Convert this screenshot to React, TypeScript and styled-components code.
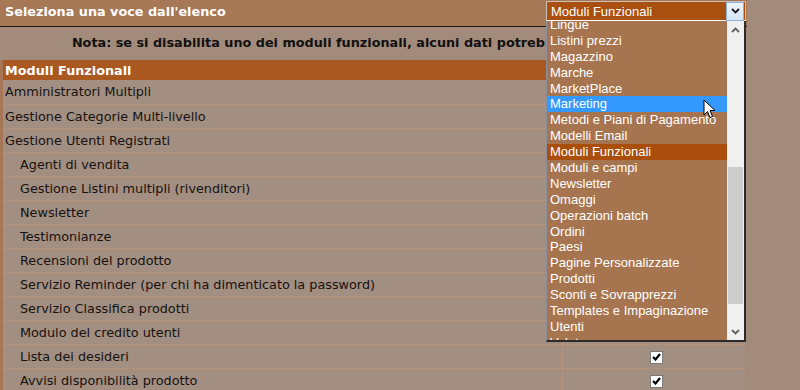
import styled, { createGlobalStyle } from 'styled-components';

const GlobalStyle = createGlobalStyle`
  body {
    margin: 0;
    background-color: #a38b7b;
    font-family: "DejaVu Sans", Verdana, sans-serif;
  }
`;

const Page = styled.div`
  position: relative;
  width: 747px;
  height: 390px;
  overflow: hidden;
`;

const TopBar = styled.div`
  height: 26px;
  background-color: #a67856;
  border-bottom: 1px solid #1e1712;
  display: flex;
  justify-content: space-between;
  align-items: flex-start;
`;

const Title = styled.div`
  color: #fff;
  font-weight: bold;
  font-size: 12.8px;
  padding: 4px 0 0 5px;
`;

const SelectWrap = styled.div`
  position: relative;
  width: 200px;
  margin-right: 1px;
`;

const SelectBox = styled.div`
  height: 18px;
  margin-top: 1px;
  background-color: #a94f10;
  border: 1px solid #c9c0b8;
  border-bottom: 2px solid #fff;
  display: flex;
  align-items: center;
  justify-content: space-between;
`;

const SelectText = styled.span`
  color: #fff;
  font-family: "Liberation Sans", Arial, sans-serif;
  font-size: 13px;
  padding-left: 4px;
`;

const SelectButton = styled.div`
  width: 16px;
  height: 17px;
  margin-right: 1px;
  background: linear-gradient(#eef4fc, #d6e5f7);
  border: 1px solid #8fb2df;
  display: flex;
  align-items: center;
  justify-content: center;
`;

const ListPopup = styled.div`
  position: absolute;
  top: 21px;
  left: 0;
  width: 197px;
  height: 319px;
  background-color: #a6754f;
  border-left: 1px solid #8c8f9c;
  border-right: 2px solid #2e2a28;
  border-bottom: 2px solid #2e2a28;
  display: flex;
  z-index: 2;
`;

const ListViewport = styled.div`
  flex: 1;
  overflow: hidden;
`;

const ListItems = styled.div`
  margin-top: -4px;
`;

const ListItem = styled.div<{ $state?: 'hover' | 'selected' }>`
  height: 15.9px;
  line-height: 15.9px;
  padding-left: 3px;
  color: #fff;
  font-family: "Liberation Sans", Arial, sans-serif;
  font-size: 13px;
  white-space: nowrap;
  background-color: ${(p) =>
    p.$state === 'hover' ? '#3399ff' : p.$state === 'selected' ? '#a94e0c' : 'transparent'};
`;

const ScrollBar = styled.div`
  width: 17px;
  background-color: #f0f0f0;
  display: flex;
  flex-direction: column;
  align-items: center;
`;

const ScrollArrow = styled.div`
  height: 17px;
  display: flex;
  align-items: center;
  justify-content: center;
`;

const ScrollTrack = styled.div`
  flex: 1;
  width: 100%;
  padding-top: 129px;
  padding-bottom: 19px;
  display: flex;
`;

const ScrollThumb = styled.div`
  flex: 1;
  margin: 0 1px;
  background-color: #cdcdcd;
`;

const Note = styled.div`
  height: 33px;
  line-height: 31px;
  text-align: center;
  font-weight: bold;
  font-size: 12.8px;
  color: #111;
  white-space: nowrap;
`;

const Table = styled.table`
  width: 745px;
  table-layout: fixed;
  border-collapse: collapse;
  border-left: 3px solid #a77656;
`;

const HeadCell = styled.th`
  height: 20px;
  padding: 0 0 0 2px;
  background-color: #a9581f;
  color: #fff;
  font-size: 12.8px;
  text-align: left;
`;

const Row = styled.tr`
  height: 24px;
  background-color: #a38f82;
  border-bottom: 1px solid #b5927a;
`;

const NameCell = styled.td<{ $indent?: boolean }>`
  padding: 0 0 0 ${(p) => (p.$indent ? '17px' : '2px')};
  font-size: 12.8px;
  color: #151210;
  white-space: nowrap;
  overflow: hidden;
`;

const CheckCell = styled.td`
  border-left: 1px solid #b5927a;
  text-align: center;
  padding: 0 0 0 5px;
`;

const CheckBox = styled.span`
  display: inline-flex;
  vertical-align: middle;
  width: 11px;
  height: 11px;
  background-color: #fff;
  border: 1px solid #7a7a7a;
  align-items: center;
  justify-content: center;
`;

const Cursor = styled.svg`
  position: absolute;
  left: 703px;
  top: 99px;
  z-index: 3;
`;

const listItems: { label: string; state?: 'hover' | 'selected' }[] = [
  { label: 'Lingue' },
  { label: 'Listini prezzi' },
  { label: 'Magazzino' },
  { label: 'Marche' },
  { label: 'MarketPlace' },
  { label: 'Marketing', state: 'hover' },
  { label: 'Metodi e Piani di Pagamento' },
  { label: 'Modelli Email' },
  { label: 'Moduli Funzionali', state: 'selected' },
  { label: 'Moduli e campi' },
  { label: 'Newsletter' },
  { label: 'Omaggi' },
  { label: 'Operazioni batch' },
  { label: 'Ordini' },
  { label: 'Paesi' },
  { label: 'Pagine Personalizzate' },
  { label: 'Prodotti' },
  { label: 'Sconti e Sovrapprezzi' },
  { label: 'Templates e Impaginazione' },
  { label: 'Utenti' },
  { label: 'Valute' },
];

const modules: { label: string; indent?: boolean }[] = [
  { label: 'Amministratori Multipli' },
  { label: 'Gestione Categorie Multi-livello' },
  { label: 'Gestione Utenti Registrati' },
  { label: 'Agenti di vendita', indent: true },
  { label: 'Gestione Listini multipli (rivenditori)', indent: true },
  { label: 'Newsletter', indent: true },
  { label: 'Testimonianze', indent: true },
  { label: 'Recensioni del prodotto', indent: true },
  { label: 'Servizio Reminder (per chi ha dimenticato la password)', indent: true },
  { label: 'Servizio Classifica prodotti', indent: true },
  { label: 'Modulo del credito utenti', indent: true },
  { label: 'Lista dei desideri', indent: true },
  { label: 'Avvisi disponibilità prodotto', indent: true },
];

function Chevron({ up, color }: { up?: boolean; color: string }) {
  return (
    <svg width="9" height="6" viewBox="0 0 9 6">
      <path
        d={up ? 'M1 5 L4.5 1.5 L8 5' : 'M1 1 L4.5 4.5 L8 1'}
        fill="none"
        stroke={color}
        strokeWidth="1.8"
      />
    </svg>
  );
}

function Check() {
  return (
    <svg width="9" height="8" viewBox="0 0 9 8">
      <path d="M1 4 L3.5 6.5 L8 1" fill="none" stroke="#000" strokeWidth="2.2" />
    </svg>
  );
}

export default function App() {
  return (
    <Page>
      <GlobalStyle />
      <TopBar>
        <Title>Seleziona una voce dall'elenco</Title>
        <SelectWrap>
          <SelectBox>
            <SelectText>Moduli Funzionali</SelectText>
            <SelectButton>
              <Chevron color="#1a1a1a" />
            </SelectButton>
          </SelectBox>
          <ListPopup>
            <ListViewport>
              <ListItems>
                {listItems.map((item) => (
                  <ListItem key={item.label} $state={item.state}>
                    {item.label}
                  </ListItem>
                ))}
              </ListItems>
            </ListViewport>
            <ScrollBar>
              <ScrollArrow>
                <Chevron up color="#606060" />
              </ScrollArrow>
              <ScrollTrack>
                <ScrollThumb />
              </ScrollTrack>
              <ScrollArrow>
                <Chevron color="#606060" />
              </ScrollArrow>
            </ScrollBar>
          </ListPopup>
        </SelectWrap>
      </TopBar>
      <Note>Nota: se si disabilita uno dei moduli funzionali, alcuni dati potrebbero non apparire</Note>
      <Table>
        <colgroup>
          <col style={{ width: 561 }} />
          <col />
        </colgroup>
        <thead>
          <tr>
            <HeadCell colSpan={2}>Moduli Funzionali</HeadCell>
          </tr>
        </thead>
        <tbody>
          {modules.map((m) => (
            <Row key={m.label}>
              <NameCell $indent={m.indent}>{m.label}</NameCell>
              <CheckCell>
                <CheckBox>
                  <Check />
                </CheckBox>
              </CheckCell>
            </Row>
          ))}
        </tbody>
      </Table>
      <Cursor width="13" height="20" viewBox="0 0 13 20">
        <path
          d="M1 1 L1 16 L4.5 12.5 L7 18.5 L9.5 17.5 L7 11.5 L12 11.5 Z"
          fill="#fff"
          stroke="#000"
          strokeWidth="1"
        />
      </Cursor>
    </Page>
  );
}
